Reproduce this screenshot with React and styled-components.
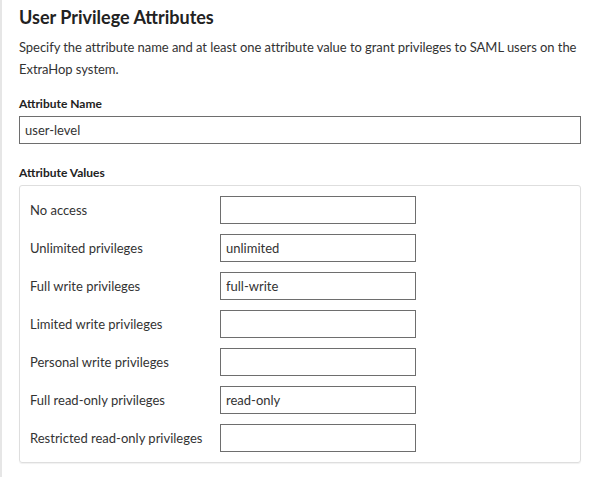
import React from "react";
import styled, { createGlobalStyle } from "styled-components";

const GlobalStyle = createGlobalStyle`
  body {
    margin: 0;
    background: #fff;
    font-family: Lato, "Open Sans", sans-serif;
    color: #333;
  }
`;

const privileges = [
  { label: "No access", value: "" },
  { label: "Unlimited privileges", value: "unlimited" },
  { label: "Full write privileges", value: "full-write" },
  { label: "Limited write privileges", value: "" },
  { label: "Personal write privileges", value: "" },
  { label: "Full read-only privileges", value: "read-only" },
  { label: "Restricted read-only privileges", value: "" },
];

const App = () => {
  return (
    <>
      <GlobalStyle />
      <Page>
        <Title>User Privilege Attributes</Title>
        <Description>
          Specify the attribute name and at least one attribute value to grant privileges to SAML
          users on the ExtraHop system.
        </Description>

        <FieldLabel>Attribute Name</FieldLabel>
        <TextInput $wide defaultValue="user-level" />

        <FieldLabel $spaced>Attribute Values</FieldLabel>
        <ValuesBox>
          {privileges.map((p) => (
            <ValueRow key={p.label}>
              <RowLabel>{p.label}</RowLabel>
              <TextInput defaultValue={p.value} />
            </ValueRow>
          ))}
        </ValuesBox>
      </Page>
    </>
  );
};

export default App;

const Page = styled.div`
  min-height: 477px;
  box-sizing: border-box;
  border-left: 2px solid #e6e6e6;
  padding: 6px 12px 0 17px;
`;

const Title = styled.h2`
  margin: 0;
  font-size: 18px;
  line-height: 22px;
  font-weight: 700;
  color: #222;
`;

const Description = styled.p`
  margin: 8px 0 0;
  font-size: 13px;
  line-height: 22px;
  letter-spacing: -0.05px;
  color: #333;
`;

const FieldLabel = styled.label`
  display: block;
  margin: ${(p) => (p.$spaced ? "22px" : "17px")} 0 5px;
  font-size: 12px;
  line-height: 14px;
  font-weight: 700;
  color: #222;
`;

const TextInput = styled.input`
  display: block;
  width: ${(p) => (p.$wide ? "562px" : "196px")};
  height: 28px;
  box-sizing: border-box;
  margin: 0;
  padding: 0 5px;
  border: 1px solid #6e6e6e;
  border-radius: 0;
  font-family: Lato, "Open Sans", sans-serif;
  font-size: 13px;
  color: #333;
  background: #fff;
  outline: none;
`;

const ValuesBox = styled.div`
  width: 562px;
  box-sizing: border-box;
  border: 1px solid #dedede;
  border-radius: 3px;
  box-shadow: 0 1px 1px rgba(0, 0, 0, 0.06);
  padding: 10px;
  display: flex;
  flex-direction: column;
  gap: 10px;
`;

const ValueRow = styled.div`
  display: flex;
  align-items: center;
`;

const RowLabel = styled.span`
  width: 190px;
  flex-shrink: 0;
  font-size: 13px;
  color: #333;
`;
